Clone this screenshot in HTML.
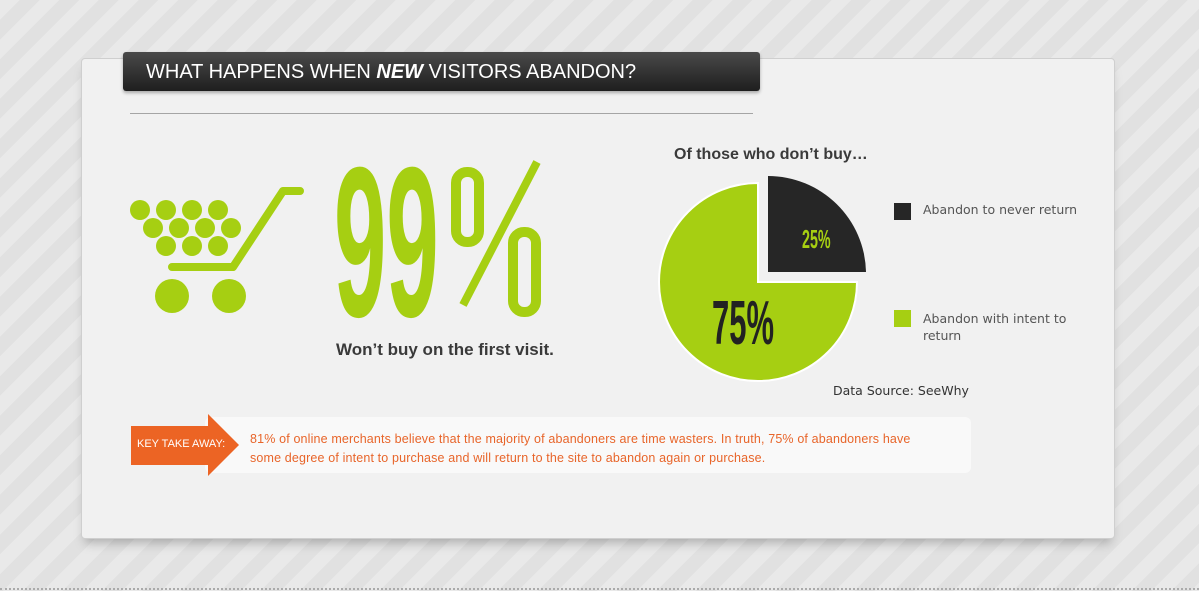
<!DOCTYPE html>
<html><head><meta charset="utf-8"><style>
body{margin:0;width:1199px;height:591px;overflow:hidden;background:repeating-linear-gradient(135deg,#e9e9e9 0 14px,#e1e1e1 14px 28px);font-family:"Liberation Sans",sans-serif;position:relative}
.card{position:absolute;left:81px;top:58px;width:1032px;height:479px;background:#f1f1f1;border:1px solid #cfcfcf;border-radius:4px;box-shadow:0 8px 10px -4px rgba(0,0,0,.25)}
.title{position:absolute;left:123px;top:52px;width:637px;height:39px;background:linear-gradient(#4a4a4a,#1e1e1e);border-radius:3px;color:#fff;font-size:20px;line-height:41px;padding-left:23px;box-sizing:border-box;box-shadow:0 2px 3px rgba(0,0,0,.3)}
.hr{position:absolute;left:130px;top:113px;width:623px;height:1px;background:#a5a5a5}
.t{position:absolute;white-space:nowrap}
.dots{position:absolute;left:0;top:588px;width:1199px;border-top:2px dotted #aaa}
</style></head><body>
<div class="card"></div>
<div class="title">WHAT HAPPENS WHEN <b><i>NEW</i></b> VISITORS ABANDON?</div>
<div class="hr"></div>
<svg style="position:absolute;left:0;top:0" width="1199" height="591">
<g fill="#a6cf12">
<circle cx="140" cy="210" r="10"/><circle cx="166" cy="210" r="10"/><circle cx="192" cy="210" r="10"/><circle cx="218" cy="210" r="10"/>
<circle cx="153" cy="228" r="10"/><circle cx="179" cy="228" r="10"/><circle cx="205" cy="228" r="10"/><circle cx="231" cy="228" r="10"/>
<circle cx="166" cy="246" r="10"/><circle cx="192" cy="246" r="10"/><circle cx="218" cy="246" r="10"/>
<circle cx="172" cy="296" r="17"/><circle cx="229" cy="296" r="17"/>
</g>
<polyline points="172,267 233,267 283,191 300,191" fill="none" stroke="#a6cf12" stroke-width="8" stroke-linecap="round" stroke-linejoin="round"/>
<text transform="translate(334,316) scale(0.44,1)" font-family="Liberation Sans" font-weight="bold" font-size="214" fill="#a6cf12">99</text>
<line x1="463" y1="305" x2="537" y2="162" stroke="#a6cf12" stroke-width="8"/>
<rect x="456" y="172" width="23" height="70" rx="11" fill="none" stroke="#a6cf12" stroke-width="10"/>
<rect x="513" y="232" width="23" height="80" rx="11" fill="none" stroke="#a6cf12" stroke-width="10"/>
<path d="M758,282 L758,183 A99,99 0 1 0 857,282 Z" fill="#a6cf12" stroke="#fff" stroke-width="2"/>
<path d="M768,272 L768,176 A98,98 0 0 1 866,272 Z" fill="#262626"/>
<text transform="translate(802,248) scale(0.55,1)" font-size="26" font-weight="bold" fill="#a6cf12">25%</text>
<text transform="translate(712,344) scale(0.5,1)" font-size="62" font-weight="bold" fill="#222">75%</text>
<rect x="894" y="203" width="17" height="17" fill="#262626"/>
<rect x="894" y="310" width="17" height="17" fill="#a6cf12"/>
<rect x="205" y="417" width="766" height="56" rx="6" fill="#f9f9f9"/>
<path d="M131,426 H208 V414 L239,445 L208,476 V465 H131 Z" fill="#ec6424"/>
</svg>
<div class="t" style="left:336px;top:340px;font-size:17px;font-weight:bold;color:#3a3a3a">Won’t buy on the first visit.</div>
<div class="t" style="left:674px;top:146px;font-size:16px;font-weight:bold;color:#3a3a3a">Of those who don’t buy…</div>
<div class="t" style="left:923px;top:202px;color:#555;font-family:'DejaVu Sans',sans-serif;font-size:12.5px">Abandon to never return</div>
<div class="t" style="left:923px;top:310px;font-size:12.5px;color:#555;font-family:'DejaVu Sans',sans-serif;line-height:17px">Abandon with intent to<br>return</div>
<div class="t" style="left:833px;top:383px;font-size:12.5px;color:#333;font-family:'DejaVu Sans',sans-serif">Data Source: SeeWhy</div>
<div class="t" style="left:137px;top:438px;font-size:11px;color:#fff">KEY TAKE AWAY:</div>
<div class="t" style="left:250px;top:430px;font-size:12.5px;color:#e8652a;line-height:19px;letter-spacing:0.15px">81% of online merchants believe that the majority of abandoners are time wasters. In truth, 75% of abandoners have<br>some degree of intent to purchase and will return to the site to abandon again or purchase.</div>
<div class="dots"></div>
</body></html>
